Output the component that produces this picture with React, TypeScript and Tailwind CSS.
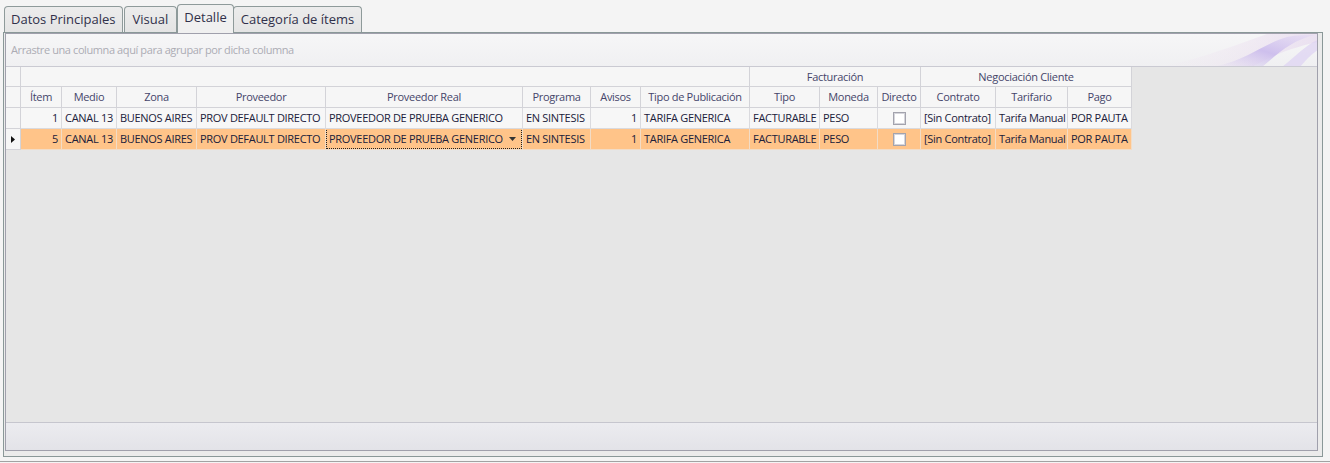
import React from "react";

const cols = [
  { key: "ind", w: 15, label: "" },
  { key: "item", w: 41, label: "Ítem" },
  { key: "medio", w: 55, label: "Medio" },
  { key: "zona", w: 80, label: "Zona" },
  { key: "prov", w: 129, label: "Proveedor" },
  { key: "provreal", w: 197, label: "Proveedor Real" },
  { key: "prog", w: 68, label: "Programa" },
  { key: "avisos", w: 50, label: "Avisos" },
  { key: "tipopub", w: 109, label: "Tipo de Publicación" },
  { key: "tipo", w: 70, label: "Tipo" },
  { key: "moneda", w: 58, label: "Moneda" },
  { key: "directo", w: 43, label: "Directo" },
  { key: "contrato", w: 75, label: "Contrato" },
  { key: "tarifario", w: 72, label: "Tarifario" },
  { key: "pago", w: 64, label: "Pago" },
];

const rows = [
  { item: "1", medio: "CANAL 13", zona: "BUENOS AIRES", prov: "PROV DEFAULT DIRECTO", provreal: "PROVEEDOR DE PRUEBA GENERICO", prog: "EN SINTESIS", avisos: "1", tipopub: "TARIFA GENERICA", tipo: "FACTURABLE", moneda: "PESO", directo: "", contrato: "[Sin Contrato]", tarifario: "Tarifa Manual", pago: "POR PAUTA" },
  { item: "5", medio: "CANAL 13", zona: "BUENOS AIRES", prov: "PROV DEFAULT DIRECTO", provreal: "PROVEEDOR DE PRUEBA GENERICO", prog: "EN SINTESIS", avisos: "1", tipopub: "TARIFA GENERICA", tipo: "FACTURABLE", moneda: "PESO", directo: "", contrato: "[Sin Contrato]", tarifario: "Tarifa Manual", pago: "POR PAUTA" },
];

const font = { fontFamily: "'Open Sans', 'Noto Sans', sans-serif" };

function Checkbox() {
  return (
    <div className="w-[13px] h-[13px] border border-[#a3a3ad] bg-white shadow-[inset_0_0_0_1px_#d6d6dc]" />
  );
}

function Tab({ label, selected, pad }: { label: string; selected?: boolean; pad: string }) {
  return (
    <div
      className={
        (selected
          ? "relative z-10 -mb-px h-[29px] pt-[3px] border border-b-0 border-[#8e9a9a] rounded-t-[4px] bg-[#f0f0f0] text-[13px] text-[#30304a] -mx-px "
          : "h-[26px] pt-[3px] border border-b-0 border-[#8e9a9a] rounded-t-[4px] bg-gradient-to-b from-[#ececec] to-[#e4e4e4] text-[13px] text-[#30304a] mr-[1px] ") + pad
      }
    >
      {label}
    </div>
  );
}

export default function App() {
  return (
    <div className="w-[1330px] h-[463px] bg-[#f4f4f4] overflow-hidden flex flex-col" style={font}>
      <div className="h-[32px] flex items-end pl-[4px]">
        <Tab label="Datos Principales" pad="px-[6px]" />
        <Tab label="Visual" pad="px-[8px]" />
        <Tab label="Detalle" selected pad="px-[6px]" />
        <Tab label="Categoría de ítems" pad="px-[7px]" />
      </div>
      <div className="ml-[3px] w-[1320px] h-[425px] border border-[#8a9898] bg-[#ebebeb] pl-px pr-[4px] pb-[5px] flex">
        <div className="flex-1 border border-[#a0a0ac] flex flex-col bg-[#e6e6e6]">
          {/* group panel */}
          <div className="relative h-[33px] shrink-0 border-b border-[#cacad2] bg-gradient-to-b from-[#f6f6f7] to-[#f0f0f2] flex items-center pl-[5px] overflow-hidden">
            <span className="text-[11px] tracking-[-0.4px] text-[#acacb4]">Arrastre una columna aquí para agrupar por dicha columna</span>
            <svg className="absolute right-0 top-0" width="200" height="33" viewBox="0 0 200 32" preserveAspectRatio="none">
              <defs>
                <linearGradient id="g1" x1="0" y1="1" x2="1" y2="0">
                  <stop offset="0" stopColor="#d9cdf0" stopOpacity="0" />
                  <stop offset="0.5" stopColor="#c8b8ec" stopOpacity="0.85" />
                  <stop offset="1" stopColor="#e2d8f4" stopOpacity="0.5" />
                </linearGradient>
                <linearGradient id="g2" x1="0" y1="0" x2="1" y2="0">
                  <stop offset="0" stopColor="#f0e2f0" stopOpacity="0" />
                  <stop offset="1" stopColor="#e6d8ee" stopOpacity="0.7" />
                </linearGradient>
              </defs>
              <path d="M40 32 C80 26 120 10 150 0 L200 0 L200 8 C170 14 150 24 135 32 Z" fill="url(#g2)" />
              <path d="M95 32 C130 26 145 10 170 3 C180 1 190 1 198 1 C175 6 162 18 145 32 Z" fill="url(#g1)" />
              <path d="M165 32 C178 22 190 10 200 6 L200 16 C194 20 188 26 183 32 Z" fill="#ddd2f2" fillOpacity="0.7" />
            </svg>
          </div>
          {/* grid */}
          <div className="flex-1 flex flex-col tracking-[-0.3px]">
            {/* band row */}
            <div className="flex h-[20px] text-[11px] text-[#45456a]">
              <div className="w-[15px] border-r border-b border-[#d3d3d8] bg-[#f6f6f6]" />
              <div className="w-[729px] border-r border-b border-[#d3d3d8] bg-[#f6f6f6]" />
              <div className="w-[171px] border-r border-b border-[#d3d3d8] bg-[#f6f6f6] flex items-center justify-center pt-px">Facturación</div>
              <div className="w-[211px] border-r border-b border-[#d3d3d8] bg-[#f6f6f6] flex items-center justify-center pt-px">Negociación Cliente</div>
            </div>
            {/* header row */}
            <div className="flex h-[21px] text-[11px] text-[#45456a]">
              {cols.map((c) => (
                <div
                  key={c.key}
                  style={{ width: c.w }}
                  className="border-r border-b border-[#d3d3d8] bg-[#f6f6f6] flex items-center justify-center whitespace-nowrap overflow-hidden pt-px"
                >
                  {c.label}
                </div>
              ))}
            </div>
            {rows.map((r, ri) => {
              const sel = ri === 1;
              return (
                <div key={ri} className="flex h-[21px] text-[11px] text-[#20203a]">
                  {cols.map((c) => {
                    if (c.key === "ind") {
                      return (
                        <div key={c.key} style={{ width: c.w }} className="border-r border-b border-[#d3d3d8] bg-[#f6f6f6] flex items-center justify-center">
                          {sel && (
                            <svg width="5" height="7" viewBox="0 0 5 7">
                              <path d="M0 0 L4 3.5 L0 7 Z" fill="#111" />
                            </svg>
                          )}
                        </div>
                      );
                    }
                    const right = c.key === "item" || c.key === "avisos";
                    const val = (r as Record<string, string>)[c.key];
                    const focus = sel && c.key === "provreal";
                    return (
                      <div
                        key={c.key}
                        style={{ width: c.w }}
                        className={
                          (sel ? "bg-[#ffc489] border-[#f2dcc6] " : "bg-[#f7f7f7] border-[#dadade] ") +
                          "relative border-r border-b flex items-center whitespace-nowrap overflow-hidden " +
                          (right ? "justify-end pr-[3px] pt-px" : c.key === "directo" ? "justify-center" : "pl-[3px] pt-px")
                        }
                      >
                        {c.key === "directo" ? <Checkbox /> : val}
                        {focus && (
                          <>
                            <div className="absolute inset-0 -top-px border border-dotted border-[#222]" />
                            <svg className="absolute right-[6px] top-[8px]" width="7" height="4" viewBox="0 0 7 4">
                              <path d="M0 0 L7 0 L3.5 4 Z" fill="#333" />
                            </svg>
                          </>
                        )}
                      </div>
                    );
                  })}
                </div>
              );
            })}
            <div className="flex-1" />
            <div className="h-[28px] border-t border-[#c6c6ce] bg-gradient-to-b from-[#ececf0] to-[#e3e3e8]" />
          </div>
        </div>
      </div>
      <div className="mt-[4px] h-px bg-[#a2a2a2]" />
    </div>
  );
}
